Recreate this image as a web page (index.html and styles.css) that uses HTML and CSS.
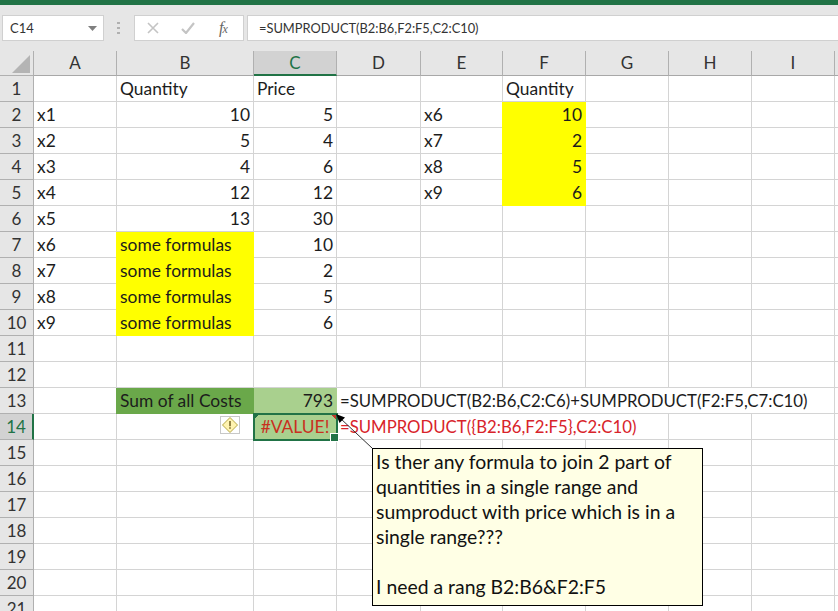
FILE: index.html
```html
<!DOCTYPE html>
<html lang="en">
<head>
<meta charset="utf-8">
<title>SUMPRODUCT</title>
<link rel="stylesheet" href="styles.css">
</head>
<body>
<div class="app">
  <div class="titlebar"></div>
  <div class="formula-bar">
    <div class="name-box"><span>C14</span><svg class="caret" width="9" height="5" viewBox="0 0 9 5"><path d="M0 0h9L4.5 5z" fill="#7f7f7f"/></svg></div>
    <svg class="grip" width="3" height="12" viewBox="0 0 3 12"><path d="M0 0h3v2H0zM0 5h3v2H0zM0 10h3v2H0z" fill="#b0b0b0"/></svg>
    <div class="fx-buttons">
      <svg width="12" height="12" viewBox="0 0 12 12"><path d="M1 1l10 10M11 1L1 11" stroke="#c4c4c4" stroke-width="1.6" fill="none"/></svg>
      <svg width="14" height="12" viewBox="0 0 14 12"><path d="M1 7l4 4 8-10" stroke="#c4c4c4" stroke-width="2.2" fill="none"/></svg>
      <span class="fx">f<span class="fx-x">x</span></span>
    </div>
    <div class="formula-input">=SUMPRODUCT(B2:B6,F2:F5,C2:C10)</div>
  </div>
  <div class="sheet">
    <div class="corner"><svg width="18" height="18" viewBox="0 0 18 18"><path d="M18 0v18H0z" fill="#b4b4b4"/></svg></div>
    <div class="col">A</div><div class="col">B</div><div class="col col-on">C</div><div class="col">D</div><div class="col">E</div><div class="col">F</div><div class="col">G</div><div class="col">H</div><div class="col">I</div><div class="col"></div>

    <div class="row">1</div><div class="c"></div><div class="c">Quantity</div><div class="c">Price</div><div class="c"></div><div class="c"></div><div class="c">Quantity</div><div class="c"></div><div class="c"></div><div class="c"></div><div class="c"></div>
    <div class="row">2</div><div class="c">x1</div><div class="c n">10</div><div class="c n">5</div><div class="c"></div><div class="c">x6</div><div class="c n y">10</div><div class="c"></div><div class="c"></div><div class="c"></div><div class="c"></div>
    <div class="row">3</div><div class="c">x2</div><div class="c n">5</div><div class="c n">4</div><div class="c"></div><div class="c">x7</div><div class="c n y">2</div><div class="c"></div><div class="c"></div><div class="c"></div><div class="c"></div>
    <div class="row">4</div><div class="c">x3</div><div class="c n">4</div><div class="c n">6</div><div class="c"></div><div class="c">x8</div><div class="c n y">5</div><div class="c"></div><div class="c"></div><div class="c"></div><div class="c"></div>
    <div class="row">5</div><div class="c">x4</div><div class="c n">12</div><div class="c n">12</div><div class="c"></div><div class="c">x9</div><div class="c n y">6</div><div class="c"></div><div class="c"></div><div class="c"></div><div class="c"></div>
    <div class="row">6</div><div class="c">x5</div><div class="c n">13</div><div class="c n">30</div><div class="c"></div><div class="c"></div><div class="c"></div><div class="c"></div><div class="c"></div><div class="c"></div><div class="c"></div>
    <div class="row">7</div><div class="c">x6</div><div class="c y">some formulas</div><div class="c n">10</div><div class="c"></div><div class="c"></div><div class="c"></div><div class="c"></div><div class="c"></div><div class="c"></div><div class="c"></div>
    <div class="row">8</div><div class="c">x7</div><div class="c y">some formulas</div><div class="c n">2</div><div class="c"></div><div class="c"></div><div class="c"></div><div class="c"></div><div class="c"></div><div class="c"></div><div class="c"></div>
    <div class="row">9</div><div class="c">x8</div><div class="c y">some formulas</div><div class="c n">5</div><div class="c"></div><div class="c"></div><div class="c"></div><div class="c"></div><div class="c"></div><div class="c"></div><div class="c"></div>
    <div class="row">10</div><div class="c">x9</div><div class="c y">some formulas</div><div class="c n">6</div><div class="c"></div><div class="c"></div><div class="c"></div><div class="c"></div><div class="c"></div><div class="c"></div><div class="c"></div>
    <div class="row">11</div><div class="c"></div><div class="c"></div><div class="c"></div><div class="c"></div><div class="c"></div><div class="c"></div><div class="c"></div><div class="c"></div><div class="c"></div><div class="c"></div>
    <div class="row">12</div><div class="c"></div><div class="c"></div><div class="c"></div><div class="c"></div><div class="c"></div><div class="c"></div><div class="c"></div><div class="c"></div><div class="c"></div><div class="c"></div>
    <div class="row">13</div><div class="c"></div><div class="c g1">Sum of all Costs</div><div class="c n g2">793</div><div class="c span6 formula">=SUMPRODUCT(B2:B6,C2:C6)+SUMPRODUCT(F2:F5,C7:C10)</div><div class="c"></div>
    <div class="row row-on">14</div><div class="c"></div><div class="c err-host"><span class="err-tag"><svg width="18" height="18" viewBox="0 0 18 18"><path d="M9 1.5l7.5 7.5-7.5 7.5L1.5 9z" fill="#fff3b0" stroke="#b5a642"/><path d="M8.2 5h1.6v5.2H8.2zM8.2 11.2h1.6v1.6H8.2z" fill="#7a6a2a"/></svg></span></div><div class="c active">#VALUE!</div><div class="c span4 formula red">=SUMPRODUCT({B2:B6,F2:F5},C2:C10)</div><div class="c"></div><div class="c"></div><div class="c"></div>
    <div class="row">15</div><div class="c"></div><div class="c"></div><div class="c"></div><div class="c"></div><div class="c"></div><div class="c"></div><div class="c"></div><div class="c"></div><div class="c"></div><div class="c"></div>
    <div class="row">16</div><div class="c"></div><div class="c"></div><div class="c"></div><div class="c"></div><div class="c"></div><div class="c"></div><div class="c"></div><div class="c"></div><div class="c"></div><div class="c"></div>
    <div class="row">17</div><div class="c"></div><div class="c"></div><div class="c"></div><div class="c"></div><div class="c"></div><div class="c"></div><div class="c"></div><div class="c"></div><div class="c"></div><div class="c"></div>
    <div class="row">18</div><div class="c"></div><div class="c"></div><div class="c"></div><div class="c"></div><div class="c"></div><div class="c"></div><div class="c"></div><div class="c"></div><div class="c"></div><div class="c"></div>
    <div class="row">19</div><div class="c"></div><div class="c"></div><div class="c"></div><div class="c"></div><div class="c"></div><div class="c"></div><div class="c"></div><div class="c"></div><div class="c"></div><div class="c"></div>
    <div class="row">20</div><div class="c"></div><div class="c"></div><div class="c"></div><div class="c"></div><div class="c"></div><div class="c"></div><div class="c"></div><div class="c"></div><div class="c"></div><div class="c"></div>
    <div class="row">21</div><div class="c"></div><div class="c"></div><div class="c"></div><div class="c"></div><div class="c"></div><div class="c"></div><div class="c"></div><div class="c"></div><div class="c"></div><div class="c"></div>
  </div>
  <svg class="leader" width="40" height="40" viewBox="0 0 40 40"><path d="M4 4l32 30" stroke="#333" stroke-width="1" fill="none"/><path d="M0 0l9 3.5-5.5 5.5z" fill="#000"/></svg>
  <div class="note">Is ther any formula to join 2 part of quantities in a single range and sumproduct with price which is in a single range???<br><br>I need a rang B2:B6&amp;F2:F5</div>
</div>
</body>
</html>
```
FILE: styles.css
```css
* { box-sizing: border-box; }
html, body { margin: 0; height: 100%; overflow: hidden; }
body { background: #fff; font-family: "Lato", "Liberation Sans", sans-serif; color: #1c1c1c; }
.app { position: relative; width: 838px; height: 611px; overflow: hidden; background: #fff; }
.titlebar { height: 5px; background: #217346; }
.formula-bar { height: 46px; background: #e6e6e6; display: flex; align-items: flex-start; padding: 10px 0 0 2px; }
.name-box { width: 102px; height: 26px; background: #fff; border: 1px solid #d0d0d0; display: flex; align-items: center; justify-content: space-between; padding: 0 6px 0 7px; font-size: 13px; color: #333; }
.grip { margin: 7px 0 0 13px; }
.fx-buttons { width: 110px; height: 26px; margin-left: 14px; background: #fff; border: 1px solid #d0d0d0; display: flex; align-items: center; gap: 22px; padding-left: 12px; }
.fx { font-family: "Liberation Serif", serif; font-style: italic; font-size: 16px; color: #666; margin-left: 2px; }
.fx-x { font-size: 12px; margin-left: -1px; }
.formula-input { width: 591px; height: 26px; margin-left: 3px; background: #fff; border: 1px solid #d0d0d0; border-right: 0; line-height: 25px; padding-left: 11px; font-size: 12.85px; color: #333; white-space: nowrap; }
.sheet { display: grid; grid-template-columns: 34px 83px 137px 83px 84px 82px 83px 83px 83px 83px 83px; grid-template-rows: 25px; grid-auto-rows: 26px; }
.corner { background: #e6e6e6; border-right: 1px solid #b0b0b0; border-bottom: 1px solid #b0b0b0; display: flex; justify-content: flex-end; align-items: flex-end; padding: 0 3px 2px 0; }
.col { background: #e6e6e6; border-right: 1px solid #b0b0b0; border-bottom: 1px solid #a8a8a8; text-align: center; font-size: 17px; line-height: 24px; color: #333; }
.col-on { background: #d2d2d2; color: #217346; border-bottom: 2px solid #217346; }
.row { background: #e6e6e6; border-right: 1px solid #b0b0b0; border-bottom: 1px solid #b0b0b0; text-align: center; font-size: 17px; line-height: 25px; color: #333; }
.row-on { background: #d2d2d2; color: #217346; border-right: 2px solid #217346; }
.c { border-right: 1px solid #d4d4d4; border-bottom: 1px solid #d4d4d4; font-size: 17.4px; line-height: 25px; padding: 0 3px; white-space: nowrap; min-width: 0; }
.n { text-align: right; }
.y { background: #ffff00; border-color: #ffff00; margin-left: -1px; }
.g1 { background: #6aa84a; border-color: #6aa84a; margin-left: -1px; padding-left: 4px; }
.y:not(.n) { padding-left: 4px; }
.g2 { background: #a9d08e; border-color: #a9d08e; }
.formula { font-size: 16.75px; }
.span6 { grid-column: span 6; }
.span4 { grid-column: span 4; }
.red { color: #d8232a; }
.err-host { position: relative; }
.err-tag { position: absolute; right: 13px; top: 2px; width: 20px; height: 18px; background: #fff; border: 1px solid #c8c8c8; display: flex; align-items: center; justify-content: center; }
.active { background: linear-gradient(135deg, #217346 4px, transparent 4px), linear-gradient(225deg, #c0392b 4px, transparent 4px), #a9d08e; color: #c9301f; text-align: center; outline: 2px solid #217346; outline-offset: -1px; position: relative; }
.active::after { content: ""; position: absolute; right: -3px; bottom: -3px; width: 7px; height: 7px; background: #217346; border: 1px solid #fff; }
.leader { position: absolute; left: 336px; top: 414px; }
.note { position: absolute; left: 372px; top: 448px; width: 331px; height: 158px; background: #ffffe5; border: 1px solid #000; padding: 0 3px; font-size: 19.4px; line-height: 25px; color: #111; }
```
